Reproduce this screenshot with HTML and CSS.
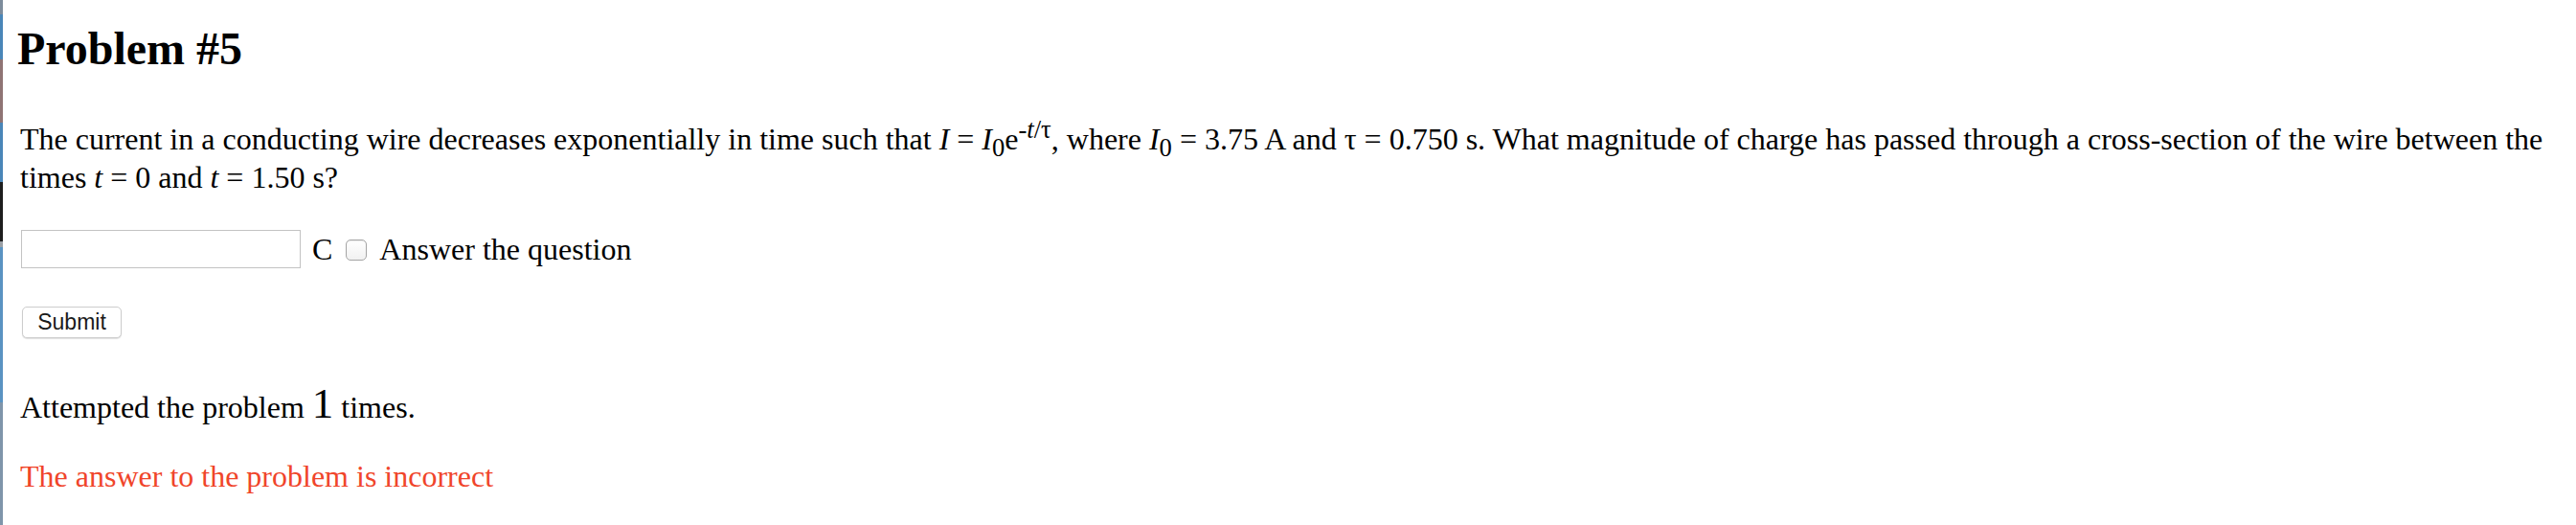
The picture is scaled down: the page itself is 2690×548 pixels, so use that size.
FILE: index.html
```html
<!DOCTYPE html>
<html lang="en">
<head>
<meta charset="utf-8">
<title>Problem #5</title>
<link rel="stylesheet" href="styles.css">
</head>
<body>
<div class="strip"></div>
<main class="page">
  <h2 class="title">Problem #5</h2>
  <p class="question"><span>The current in a conducting wire decreases exponentially in time such that</span> <i>I</i> = <i>I</i><sub>0</sub>e<sup>-<i>t</i>/τ</sup>, <span>where</span> <i>I</i><sub>0</sub> = <span>3.75 A and τ = 0.750 s. What magnitude of charge has passed through a cross-section of the wire between the</span> <span>times</span> <i>t</i> = 0 and <i>t</i> = 1.50 s?</p>
  <div class="answer-row">
    <input class="answer-input" type="text" aria-label="Answer">
    <span class="unit">C</span>
    <input class="check" type="checkbox" id="ans">
    <label class="check-label" for="ans">Answer the question</label>
  </div>
  <div class="submit-row">
    <button class="submit" type="button">Submit</button>
  </div>
  <p class="attempts">Attempted the problem <span class="count">1</span> times.</p>
  <p class="result">The answer to the problem is incorrect</p>
</main>
</body>
</html>
```
FILE: styles.css
```css
html, body {
  margin: 0;
  padding: 0;
  background: #ffffff;
}

body {
  display: flex;
  min-height: 548px;
  font-family: "Liberation Serif", "Times New Roman", serif;
  color: #000000;
}

.strip {
  flex: 0 0 3px;
  background: linear-gradient(to bottom,
    #7d8c9c 0px, #7d8c9c 15px,
    #4a86b8 15px, #4a86b8 62px,
    #8f7474 62px, #8f7474 128px,
    #4a86b8 128px, #4a86b8 190px,
    #1e1e1e 190px, #1e1e1e 252px,
    #9aa0a6 252px, #9aa0a6 258px,
    #5a93c2 258px, #5a93c2 420px,
    #7f95aa 420px, #7f95aa 548px);
}

.page {
  flex: 1 1 auto;
  padding: 0 8px 0 18px;
}

.title {
  margin: 23px 0 0 -3px;
  font-size: 48px;
  line-height: 55px;
  font-weight: bold;
}

.question {
  margin: 43.87px 0 0 0;
  font-size: 32px;
  line-height: 34.7px;
}

.question sub,
.question sup {
  font-size: 0.83em;
  line-height: 27px;
}

.answer-row {
  display: flex;
  align-items: center;
  margin-top: 37.36px;
  height: 40px;
  font-size: 32px;
  line-height: 34.7px;
}

.answer-input {
  box-sizing: border-box;
  width: 292px;
  height: 40px;
  margin: 0 0 0 1px;
  border: 1px solid #c3c3c3;
  border-radius: 0;
  padding: 0 6px;
  font-size: 22px;
  background: #ffffff;
  outline: none;
}

.unit {
  margin-left: 12px;
}

.check {
  appearance: none;
  -webkit-appearance: none;
  box-sizing: border-box;
  width: 22px;
  height: 22px;
  margin: 3px 0 0 14px;
  border: 1px solid #a5a5a5;
  border-radius: 5px;
  background: linear-gradient(to bottom, #ffffff, #f1f1f1);
  box-shadow: inset 0 1px 1px rgba(0, 0, 0, 0.08);
}

.check-label {
  margin-left: 13px;
}

.submit-row {
  display: flex;
  margin-top: 40px;
}

.submit {
  box-sizing: border-box;
  width: 104px;
  height: 33px;
  margin-left: 2px;
  padding: 0;
  border: 1px solid #cdcdcd;
  border-radius: 5px;
  background: #ffffff;
  box-shadow: 0 1px 1px rgba(0, 0, 0, 0.12);
  font-family: "Liberation Sans", Arial, sans-serif;
  font-size: 23px;
  color: #1a1a1a;
}

.attempts {
  margin: 55.35px 0 0 0;
  font-size: 32px;
  line-height: 34.7px;
}

.count {
  font-size: 45px;
  line-height: 0;
}

.result {
  margin: 36.8px 0 0 0;
  font-size: 32px;
  line-height: 34.7px;
  color: #f0452a;
}
```
